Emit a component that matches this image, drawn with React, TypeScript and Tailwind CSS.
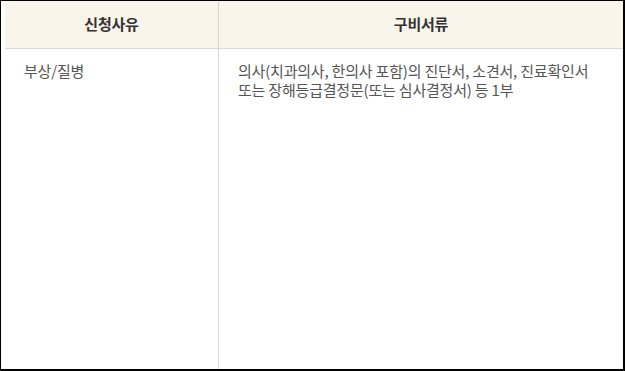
export default function App() {
  return (
    <div
      className="w-[625px] h-[371px] bg-white border-l border-t border-r-2 border-b-2 border-black pl-1 flex flex-col"
      style={{ fontFamily: '"Noto Sans CJK KR", "Noto Sans", sans-serif' }}
    >
      {/* header */}
      <div className="flex h-[48px] shrink-0 bg-[#f9f5ea] border-b border-[#d8d8d8]">
        <div className="w-[214px] border-r border-[#d8d8d8] flex items-center justify-center text-[15px] tracking-[-0.2px] font-bold text-[#333]">
          신청사유
        </div>
        <div className="flex-1 flex items-center justify-center text-[15px] tracking-[-0.2px] font-bold text-[#333]">
          구비서류
        </div>
      </div>

      {/* body */}
      <div className="flex flex-1">
        <div className="w-[214px] border-r border-[#d8d8d8] pl-[19px] pt-[12px] text-[15px] tracking-[-0.2px] leading-[19px] text-[#555]">
          부상/질병
        </div>
        <div className="flex-1 pl-[19px] pr-4 pt-[12px] text-[15px] tracking-[-0.2px] leading-[19px] text-[#555]">
          의사(치과의사, 한의사 포함)의 진단서, 소견서, 진료확인서
          <br />
          또는 장해등급결정문(또는 심사결정서) 등 1부
        </div>
      </div>
    </div>
  );
}
